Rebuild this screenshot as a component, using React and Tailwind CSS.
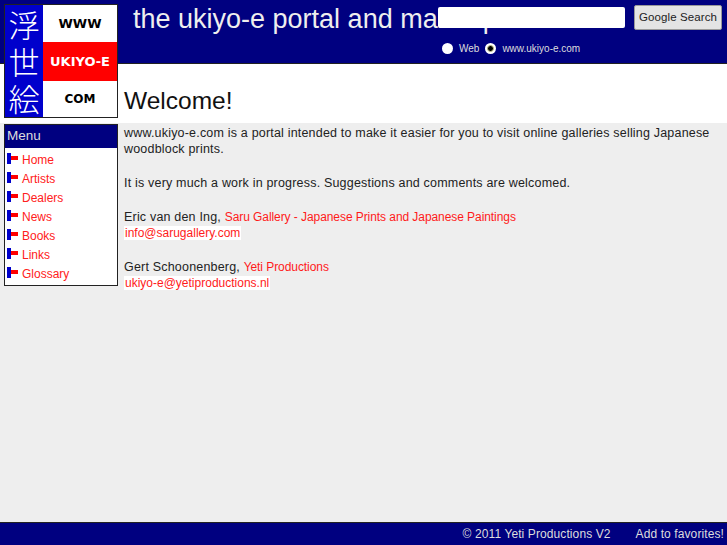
// App.jsx
const menuItems = ["Home", "Artists", "Dealers", "News", "Books", "Links", "Glossary"];

const Flag = () => (
  <svg width="11" height="11" viewBox="0 0 11 11" className="shrink-0">
    <rect x="0" y="0" width="4" height="11" fill="#0000cc" />
    <rect x="4" y="3" width="7" height="4" fill="#ff0000" />
  </svg>
);

const Logo = () => (
  <div className="absolute left-[4px] top-[4px] z-20 flex h-[114px] w-[114px] border border-[#222] bg-white">
    <div className="flex w-[38px] flex-col items-center bg-[#0000cc] font-['Noto_Sans_CJK_JP',sans-serif] text-[31px] font-light leading-[37px] text-white">
      <span>浮</span>
      <span>世</span>
      <span>絵</span>
    </div>
    <div className="flex flex-1 flex-col font-['DejaVu_Sans',sans-serif] font-bold">
      <div className="flex h-[37px] items-center justify-center text-[13px] text-black">WWW</div>
      <div className="flex h-[39px] items-center justify-center bg-[#ff0000] text-[13px] text-white">UKIYO-E</div>
      <div className="flex flex-1 items-center justify-center text-[12px] text-black">COM</div>
    </div>
  </div>
);

const Radio = ({ checked }) => (
  <span className="flex h-[11px] w-[11px] items-center justify-center rounded-full bg-white">
    {checked && <span className="h-[7px] w-[7px] rounded-full border border-[#c8c88a] bg-black" />}
  </span>
);

const SearchBox = () => (
  <div className="absolute left-[438px] top-[5px] z-10 w-[285px]">
    <div className="flex items-start gap-[9px]">
      <input type="text" className="mt-[2px] h-[21px] w-[187px] rounded-[2px] bg-white" />
      <button className="h-[25px] w-[88px] rounded-[2px] border border-[#999] bg-[#e4e4e4] text-[11.5px] tracking-[0.1px] text-[#222]">
        Google Search
      </button>
    </div>
    <div className="mt-[11px] flex items-center pl-[4px] text-[10px] text-[#dddddd]">
      <Radio />
      <span className="ml-[6px]">Web</span>
      <span className="ml-[6px]"><Radio checked /></span>
      <span className="ml-[6px]">www.ukiyo-e.com</span>
    </div>
  </div>
);

const Mail = ({ children }) => (
  <span className="bg-white px-[1px] text-[12px] tracking-normal text-[#ff1a1a]">{children}</span>
);

const App = () => {
  return (
    <div className="relative flex h-[545px] w-[727px] flex-col overflow-hidden bg-[#eeeeee] font-['Liberation_Sans',sans-serif] text-[#222]">
      <Logo />
      <SearchBox />

      <header className="h-[64px] shrink-0 border-b border-[#222] bg-[#000080] pl-[133px] pt-[3px]">
        <h1 className="whitespace-nowrap text-[27px] leading-[32px] text-[#eeeeee]">
          the ukiyo-e portal and marketplace
        </h1>
      </header>

      <div className="h-[59px] shrink-0 bg-white pl-[124px] pt-[20px]">
        <h2 className="text-[24.5px] leading-[34px] text-[#111]">Welcome!</h2>
      </div>

      <main className="flex min-h-0 flex-1 pl-[4px] pt-[1px]">
        <nav className="h-[162px] w-[114px] shrink-0 border border-[#222] bg-white">
          <div className="h-[23px] bg-[#000080] pl-[2px] text-[13.5px] leading-[22px] text-[#dddddd]">Menu</div>
          <ul className="pt-[2px]">
            {menuItems.map((item) => (
              <li key={item} className="flex h-[19px] items-center gap-[4px] pl-[2px] text-[12px] text-[#ff2020]">
                <span className="-mt-[3px] flex"><Flag /></span>
                <a href="#">{item}</a>
              </li>
            ))}
          </ul>
        </nav>

        <section className="flex-1 pl-[6px] pr-[10px] pt-[1px] text-[12.5px] leading-[16px] tracking-[0.19px]">
          <p>
            www.ukiyo-e.com is a portal intended to make it easier for you to visit online galleries selling Japanese woodblock prints.
          </p>
          <p className="mt-[18px]">It is very much a work in progress. Suggestions and comments are welcomed.</p>
          <p className="mt-[18px]">
            Eric van den Ing, <a href="#" className="text-[12px] tracking-[-0.07px] text-[#ff1a1a]">Saru Gallery - Japanese Prints and Japanese Paintings</a>
            <br />
            <Mail>info@sarugallery.com</Mail>
          </p>
          <p className="mt-[18px]">
            Gert Schoonenberg, <a href="#" className="text-[12px] tracking-[-0.07px] text-[#ff1a1a]">Yeti Productions</a>
            <br />
            <Mail>ukiyo-e@yetiproductions.nl</Mail>
          </p>
        </section>
      </main>

      <footer className="flex h-[23px] shrink-0 items-center justify-end gap-[25px] border-t border-[#222] bg-[#000080] pr-[3px] text-[12px] tracking-[0.1px] text-[#dddddd]">
        <span>© 2011 Yeti Productions V2</span>
        <span>Add to favorites!</span>
      </footer>
    </div>
  );
};

export default App;
